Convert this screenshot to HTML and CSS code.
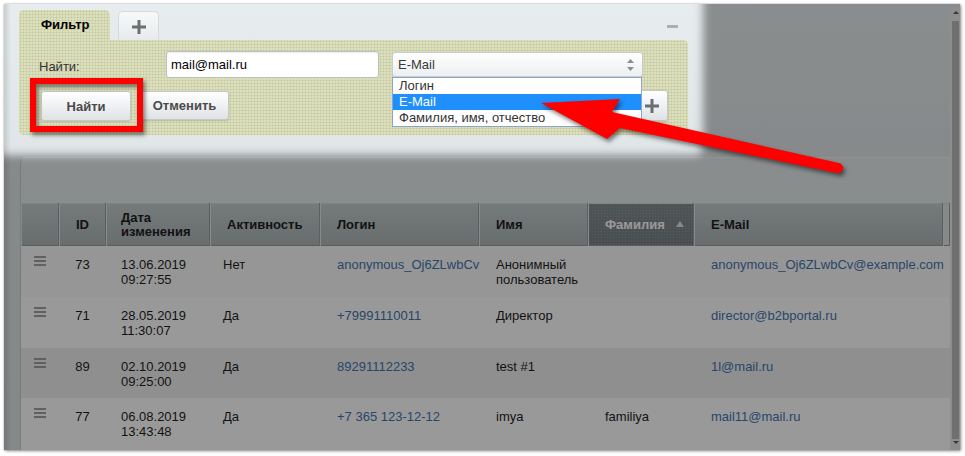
FILE: index.html
```html
<!DOCTYPE html>
<html lang="ru">
<head>
<meta charset="utf-8">
<title>Пользователи</title>
<link rel="stylesheet" href="styles.css">
</head>
<body>
<div class="frame">
  <div class="page">
    <section class="filter">
      <div class="filter-head">
        <div class="tabs">
          <div class="tab tab-active">Фильтр</div>
          <div class="tab tab-add">
            <svg width="14" height="14" viewBox="0 0 14 14"><path d="M7 0v14M0 7h14" stroke="#6b6f71" stroke-width="3"/></svg>
          </div>
        </div>
        <div class="collapse"></div>
      </div>
      <div class="panel">
        <div class="panel-row">
          <label class="panel-label">Найти:</label>
          <div class="input">mail@mail.ru</div>
          <div class="select">
            <span class="select-value">E-Mail</span>
            <svg class="select-arrows" width="7" height="12" viewBox="0 0 7 12"><path d="M3.5 0L7 4H0z M3.5 12L0 8h7z" fill="#8a8e90"/></svg>
            <ul class="select-list">
              <li>Логин</li>
              <li class="is-selected">E-Mail</li>
              <li>Фамилия, имя, отчество</li>
            </ul>
          </div>
        </div>
        <div class="panel-row panel-buttons">
          <button class="btn btn-find">Найти</button>
          <button class="btn btn-cancel">Отменить</button>
          <button class="btn btn-plus">
            <svg width="14" height="14" viewBox="0 0 14 14"><path d="M7 0v14M0 7h14" stroke="#6b6f71" stroke-width="3"/></svg>
          </button>
        </div>
      </div>
    </section>

    <section class="grid">
      <div class="grid-toolbar"></div>
      <table class="grid-table">
        <colgroup>
          <col class="w-drag"><col class="w-id"><col class="w-date"><col class="w-act"><col class="w-login"><col class="w-name"><col class="w-last"><col class="w-email"><col class="w-end">
        </colgroup>
        <thead>
          <tr>
            <th></th>
            <th class="c-id">ID</th>
            <th class="c-date">Дата<br>изменения</th>
            <th>Активность</th>
            <th>Логин</th>
            <th>Имя</th>
            <th class="sorted">Фамилия<span class="sort-arrow"></span></th>
            <th>E-Mail</th>
            <th class="c-end"></th>
          </tr>
        </thead>
        <tbody>
          <tr class="row r1">
            <td><span class="drag"></span></td>
            <td class="c-id">73</td>
            <td class="c-date">13.06.2019 09:27:55</td>
            <td class="c-act">Нет</td>
            <td class="nowrap"><span class="link">anonymous_Oj6ZLwbCv</span></td>
            <td>Анонимный пользователь</td>
            <td></td>
            <td class="nowrap"><span class="link">anonymous_Oj6ZLwbCv@example.com</span></td>
            <td></td>
          </tr>
          <tr class="row r2">
            <td><span class="drag"></span></td>
            <td class="c-id">71</td>
            <td class="c-date">28.05.2019 11:30:07</td>
            <td class="c-act">Да</td>
            <td class="nowrap"><span class="link">+79991110011</span></td>
            <td>Директор</td>
            <td></td>
            <td class="nowrap"><span class="link">director@b2bportal.ru</span></td>
            <td></td>
          </tr>
          <tr class="row r3">
            <td><span class="drag"></span></td>
            <td class="c-id">89</td>
            <td class="c-date">02.10.2019 09:25:00</td>
            <td class="c-act">Да</td>
            <td class="nowrap"><span class="link">89291112233</span></td>
            <td>test #1</td>
            <td></td>
            <td class="nowrap"><span class="link">1l@mail.ru</span></td>
            <td></td>
          </tr>
          <tr class="row r4">
            <td><span class="drag"></span></td>
            <td class="c-id">77</td>
            <td class="c-date">06.08.2019 13:43:48</td>
            <td class="c-act">Да</td>
            <td class="nowrap"><span class="link">+7 365 123-12-12</span></td>
            <td>imya</td>
            <td>familiya</td>
            <td class="nowrap"><span class="link">mail11@mail.ru</span></td>
            <td></td>
          </tr>
        </tbody>
      </table>
    </section>
  </div>

  <div class="scrollbar">
    <span class="sb-up"></span>
    <span class="sb-thumb"></span>
    <span class="sb-down"></span>
  </div>

  <div class="spotlight"></div>
</div>

<svg class="annotation" width="965" height="456" viewBox="0 0 965 456">
  <rect x="33" y="81" width="107" height="48" fill="none" stroke="#ff0000" stroke-width="6"/>
  <path d="M541 103 L620 99 L612 112 L839 163 A5 5 0 0 1 837 173 L620 128 L607 139 Z" fill="#ff0000"/>
</svg>
</body>
</html>
```

FILE: styles.css
```css
* {
  box-sizing: border-box;
  margin: 0;
  padding: 0;
}

html, body {
  background: #ffffff;
}

body {
  position: relative;
  width: 965px;
  height: 456px;
  overflow: hidden;
  font-family: "Liberation Sans", Arial, sans-serif;
  font-size: 13px;
  color: #222;
}

/* ---------- outer frame ---------- */
.frame {
  position: relative;
  margin: 4px 0 0 4px;
  width: 956px;
  height: 446px;
  display: grid;
  grid-template-columns: 946px 10px;
  overflow: hidden;
  background: #e1e7e8;
  box-shadow: 1px 1px 3px rgba(0, 0, 0, 0.45), 0 0 1px rgba(0, 0, 0, 0.35);
}

.page {
  padding-top: 6px;
  background:
    linear-gradient(to right, rgba(0, 0, 0, 0.13), rgba(0, 0, 0, 0) 7px),
    linear-gradient(#e7ecee, #e0e6e8 150px, #dde4e5);
}

/* ---------- filter ---------- */
.filter {
  width: 669px;
  margin-left: 15px;
}

.filter-head {
  display: flex;
  height: 30px;
}

.tabs {
  display: flex;
  gap: 8px;
  align-items: flex-end;
}

.tab {
  height: 30px;
  border-radius: 5px 5px 0 0;
}

.tab-active,
.panel {
  background:
    radial-gradient(circle, #c2c69e 0.75px, rgba(0, 0, 0, 0) 1.15px) 0 0 / 3px 3px,
    #dcdfbb;
}

.tab-active {
  width: 91px;
  padding-left: 22px;
  font-weight: bold;
  line-height: 30px;
  color: #000;
}

.tab-add {
  width: 41px;
  height: 29px;
  display: flex;
  align-items: center;
  justify-content: center;
  padding-top: 2px;
  background: linear-gradient(#f8fafa, #e6eaec);
  border: 1px solid #d5dadc;
  border-bottom: 0;
}

.collapse {
  margin: 15px 10px 0 auto;
  width: 11px;
  height: 3px;
  background: #a9afb2;
}

.panel {
  height: 95px;
  border-radius: 0 5px 5px 5px;
  padding: 11px 20px 0 20px;
}

.panel-row {
  display: flex;
  align-items: flex-start;
}

.panel-label {
  width: 127px;
  padding-top: 2px;
  line-height: 27px;
  color: #333;
}

.input {
  width: 213px;
  height: 27px;
  padding-left: 4px;
  line-height: 25px;
  color: #000;
  background: #fff;
  border: 1px solid #bcc0c3;
  border-radius: 3px;
  box-shadow: inset 0 1px 2px rgba(0, 0, 0, 0.08);
}

.select {
  position: relative;
  width: 251px;
  height: 25px;
  margin: 1px 0 0 13px;
  padding-left: 5px;
  display: flex;
  align-items: center;
  justify-content: space-between;
  padding-right: 8px;
  color: #3a3a3a;
  background: linear-gradient(#ffffff, #eceff0);
  border: 1px solid #c8ccd0;
  border-radius: 3px;
  box-shadow: 0 1px 1px rgba(0, 0, 0, 0.1);
}

.select-list {
  position: absolute;
  top: calc(100% + 1px);
  left: -1px;
  width: 250px;
  list-style: none;
  background: #fff;
  border: 1px solid #8ba4cc;
  z-index: 3;
}

.select-list li {
  height: 16px;
  line-height: 16px;
  padding-left: 6px;
  color: #333;
}

.select-list li.is-selected {
  background: #1f8ffd;
  color: #fff;
}

.panel-buttons {
  margin-top: 11px;
  padding-left: 2px;
}

.btn {
  font-family: "Liberation Sans", Arial, sans-serif;
  font-size: 13px;
  font-weight: bold;
  color: #4a4a4a;
  background: linear-gradient(#ffffff, #dfe3e5);
  border: 1px solid #c3c8cb;
  border-radius: 3px;
  box-shadow: 0 1px 2px rgba(0, 0, 0, 0.15);
}

.btn-find {
  width: 90px;
  height: 30px;
}

.btn-cancel {
  width: 89px;
  height: 29px;
  margin-left: 9px;
}

.btn-plus {
  width: 32px;
  height: 31px;
  margin: -1px 0 0 auto;
  display: flex;
  align-items: center;
  justify-content: center;
}

/* ---------- grid ---------- */
.grid {
  margin: 22px 0 0 16px;
  background: #e6eced;
  border-top: 1px solid #f3f6f6;
  border-left: 1px solid #c6cdce;
  border-radius: 6px 0 0 0;
  overflow: hidden;
}

.grid-toolbar {
  height: 45px;
}

.grid-table {
  width: 929px;
  border-collapse: collapse;
  table-layout: fixed;
}

.w-drag { width: 38px; }
.w-id { width: 47px; }
.w-date { width: 104px; }
.w-act { width: 110px; }
.w-login { width: 159px; }
.w-name { width: 109px; }
.w-last { width: 106px; }
.w-email { width: 249px; }
.w-end { width: 7px; }

.grid-table th {
  height: 43px;
  padding: 0 4px 0 17px;
  text-align: left;
  vertical-align: middle;
  font-weight: bold;
  line-height: 14px;
  color: #1e1e1e;
  background: linear-gradient(#c4ccce, #adb5b7);
  box-shadow:
    inset 1px 0 0 #dfe6e8,
    inset -1px 0 0 #99a1a3,
    inset 0 1px 0 #d3dadc,
    inset 0 -1px 0 #959d9f;
}

.grid-table th.c-id {
  text-align: center;
  padding: 0;
}

.grid-table th.c-date {
  padding-left: 15px;
}

.grid-table th.sorted {
  color: #ffffff;
  background:
    radial-gradient(circle, rgba(255, 255, 255, 0.13) 0.7px, rgba(0, 0, 0, 0) 1.1px) 0 0 / 3px 3px,
    linear-gradient(#838c8e, #788183);
}

.grid-table th.c-end {
  padding: 0;
  background: #dfe5e6;
}

.sort-arrow {
  display: inline-block;
  margin-left: 11px;
  vertical-align: 2px;
  border-left: 4px solid transparent;
  border-right: 4px solid transparent;
  border-bottom: 6px solid #e2e4e5;
}

.grid-table td {
  padding: 11px 8px 0 17px;
  vertical-align: top;
  line-height: 15px;
  color: #1f1f1f;
}

.grid-table td:first-child {
  padding: 10px 0 0 0;
}

.grid-table td.c-id {
  text-align: center;
  padding-left: 0;
  padding-right: 0;
}

.grid-table td.c-date {
  padding-left: 15px;
  padding-right: 12px;
}

.grid-table td.c-act {
  padding-left: 13px;
}

.grid-table td.nowrap {
  white-space: nowrap;
  padding-right: 0;
}

.row.r1 td { height: 51px; background: #fbfbfb; }
.row.r2 td { height: 51px; background: #ffffff; }
.row.r3 td { height: 50px; background: #eeefef; }
.row.r4 td { height: 52px; background: #ffffff; }

.drag {
  display: block;
  width: 12px;
  height: 10px;
  margin: 0 auto;
  background: linear-gradient(#9ea2a2 0 2px, transparent 2px 4px, #9ea2a2 4px 6px, transparent 6px 8px, #9ea2a2 8px 10px);
}

.link {
  color: #4575b0;
}

/* ---------- scrollbar ---------- */
.scrollbar {
  display: flex;
  flex-direction: column;
  align-items: flex-start;
  padding-left: 2px;
  background: #ececec;
}

.sb-up {
  margin: 7px 0 0 1px;
  border-left: 3px solid transparent;
  border-right: 3px solid transparent;
  border-bottom: 3px solid #5a5a5a;
}

.sb-thumb {
  flex: 1;
  width: 7px;
  margin-top: 7px;
  background: #b9b9b9;
}

.sb-down {
  margin: 2px 0 6px 1px;
  border-left: 3px solid transparent;
  border-right: 3px solid transparent;
  border-top: 3px solid #5a5a5a;
}

/* ---------- spotlight overlay ---------- */
.spotlight {
  position: absolute;
  left: -40px;
  top: -40px;
  width: 739px;
  height: 191px;
  border-radius: 8px;
  box-shadow: 0 0 0 1500px rgba(0, 0, 0, 0.4);
  filter: blur(4px);
  pointer-events: none;
  z-index: 5;
}

/* ---------- annotations ---------- */
.annotation {
  position: absolute;
  left: 0;
  top: 0;
  z-index: 10;
  pointer-events: none;
  filter: drop-shadow(2px 3px 2px rgba(0, 0, 0, 0.5));
}
```
